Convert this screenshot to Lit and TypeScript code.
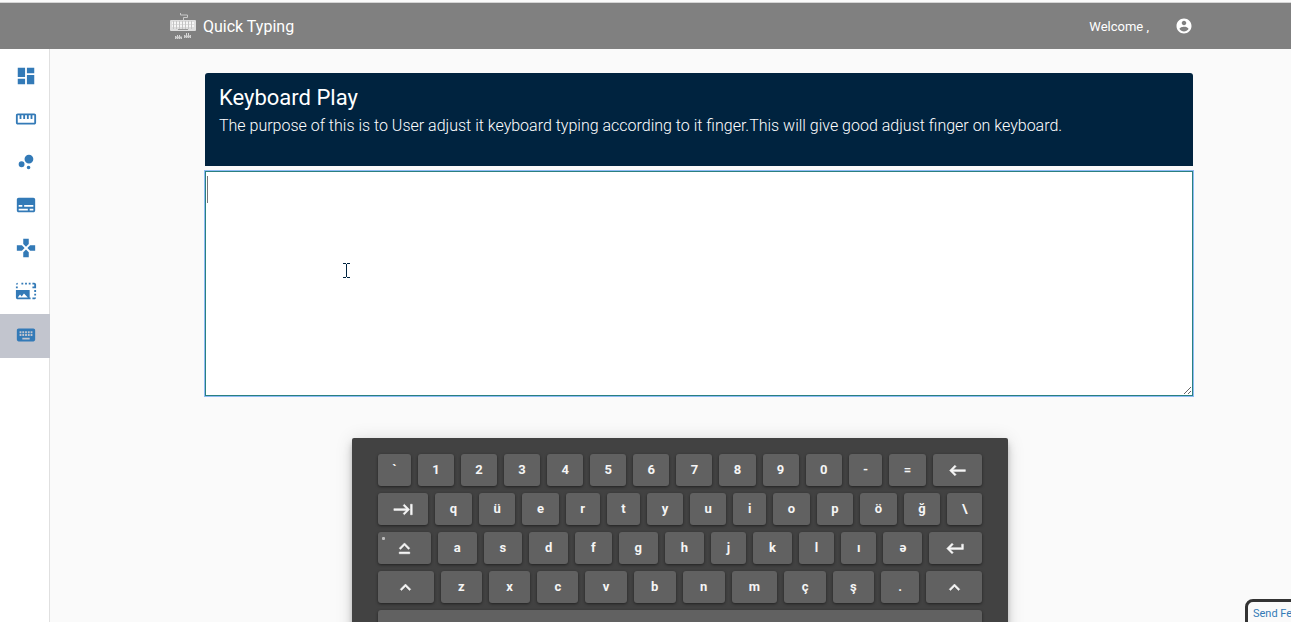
import { LitElement, html, css, svg } from "lit";
import { customElement } from "lit/decorators.js";

const nav = [
  { label: "Dashboard", d: "M3 13h8V3H3v10zm0 8h8v-6H3v6zm10 0h8V11h-8v10zm0-18v6h8V3h-8z" },
  { label: "Measure", d: "M21 6H3c-1.100 0-2 .9-2 2v8c0 1.100.9 2 2 2h18c1.100 0 2-.9 2-2V8c0-1.100-.9-2-2-2zm0 10H3V8h2v4h2V8h2v4h2V8h2v4h2V8h2v4h2V8h2v8z" },
  { label: "Bubbles", d: "M10.400 14.400a3.200 3.200 0 1 1-6.400 0a3.200 3.200 0 1 1 6.400 0zM16.800 18a2 2 0 1 1-4 0a2 2 0 1 1 4 0zM20 8.800a4.800 4.800 0 1 1-9.600 0a4.800 4.800 0 1 1 9.600 0z" },
  { label: "Subtitles", d: "M20 4H4c-1.100 0-2 .9-2 2v12c0 1.100.9 2 2 2h16c1.100 0 2-.9 2-2V6c0-1.100-.9-2-2-2zM4 12h4v2H4v-2zm10 6H4v-2h10v2zm6 0h-4v-2h4v2zm0-4H10v-2h10v2z" },
  { label: "Games", d: "M15 7.500V2H9v5.500l3 3 3-3zM7.500 9H2v6h5.500l3-3-3-3zM9 16.500V22h6v-5.500l-3-3-3 3zM16.500 9l-3 3 3 3H22V9h-5.500z" },
  { label: "Picture size", d: "M15 21h2v-2h-2v2zm4-12h2V7h-2v2zm4-4h-2v2h2V5zM15 5h2V3h-2v2zm6 8h2v-2h-2v2zm0 8c1 0 2-1 2-2h-2v2zm0-12h2V7h-2v2zm0-4h2c0-1-1-2-2-2v2zm0 12h2v-2h-2v2zM1 9h2V7H1v2zm0 4h2v-2H1v2zM11 5h2V3h-2v2zm8 0h2V3h-2v2zm0 16h2v-2h-2v2zM7 5h2V3H7v2zM1 19c0 1.100.9 2 2 2h13v-10H1v8zm2 0l2.500-3.210 1.790 2.150 2.500-3.220L14 19H3zM3 3C2 3 1 4 1 5h2V3z" },
  { label: "Keyboard", d: "M20 5H4c-1.100 0-1.990.9-1.990 2L2 17c0 1.100.9 2 2 2h16c1.100 0 2-.9 2-2V7c0-1.100-.9-2-2-2zm-9 3h2v2h-2V8zm0 3h2v2h-2v-2zM8 8h2v2H8V8zm0 3h2v2H8v-2zm-1 2H5v-2h2v2zm0-3H5V8h2v2zm9 7H8v-2h8v2zm0-4h-2v-2h2v2zm0-3h-2V8h2v2zm3 3h-2v-2h2v2zm0-3h-2V8h2v2z", active: true },
];

const glyphs: Record<string, string> = {
  Backspace: "M21 11H6.830l3.580-3.590L9 6l-6 6 6 6 1.410-1.410L6.830 13H21z",
  Tab: "M11.590 7.410L15.170 11H1v2h14.170l-3.590 3.590L13 18l6-6-6-6-1.410 1.410zM20 6v12h2V6h-2z",
  "Caps Lock": "M12 8.410L16.590 13 18 11.590l-6-6-6 6L7.410 13 12 8.410zM6 18h12v-2H6v2z",
  Enter: "M19 7v4H5.830l3.580-3.590L8 6l-6 6 6 6 1.410-1.410L5.830 13H21V7z",
  Shift: "M12 8l-6 6 1.410 1.410L12 10.830l4.590 4.580L18 14z",
};

const rows = [
  ["`", "1", "2", "3", "4", "5", "6", "7", "8", "9", "0", "-", "=", "Backspace"],
  ["Tab", "q", "ü", "e", "r", "t", "y", "u", "i", "o", "p", "ö", "ğ", "\\"],
  ["Caps Lock", "a", "s", "d", "f", "g", "h", "j", "k", "l", "ı", "ə", "Enter"],
  ["Shift", "z", "x", "c", "v", "b", "n", "m", "ç", "ş", ".", "Shift"],
  [" "],
];

@customElement("app-root")
export class AppRoot extends LitElement {
  static styles = css`
    :host {
      display: flex;
      flex-direction: column;
      position: relative;
      height: 100vh;
      overflow: hidden;
      background: #fafafa;
      font-family: Roboto, "Noto Sans", sans-serif;
    }
    * { box-sizing: border-box; }
    svg { display: block; fill: currentColor; }
    .top {
      flex: none;
      display: flex;
      align-items: center;
      height: 49px;
      padding: 2px 98px 0 169px;
      border-top: 1px solid #fafafa;
      background: linear-gradient(#fafafa 1px, #d5d5d5 1px, #d5d5d5 2px, #808080 2px);
      color: #fff;
    }
    .brand {
      display: flex;
      align-items: center;
      gap: 6px;
      color: #fff;
      font-size: 16px;
      text-decoration: none;
    }
    .welcome {
      margin-left: auto;
      font-size: 13px;
    }
    .account {
      margin-left: 26px;
      padding: 0;
      border: 0;
      background: none;
      color: #fff;
    }
    .body { flex: 1; display: flex; min-height: 0; }
    .side {
      flex: none;
      width: 50px;
      padding-top: 5px;
      border-right: 1px solid #e0e0e0;
      background: #fff;
    }
    .link {
      display: flex;
      align-items: center;
      width: 50px;
      height: 43px;
      padding-left: 15px;
      color: #337ab7;
    }
    .active { height: 44px; margin-top: 2px; padding-bottom: 2px; background: #c2c5ce; }
    .main { flex: 1; min-width: 0; padding: 24px 0 0 19px; }
    .panel { margin: 0 98px 0 136px; }
    .intro {
      height: 93px;
      padding: 11px 14px;
      border-radius: 3px 3px 0 0;
      background: #00233f;
      color: #fff;
    }
    .title { margin: 0; font-size: 22px; font-weight: 400; line-height: 28px; }
    .text { margin: 2px 0 0; font-size: 16px; font-weight: 300; line-height: 24px; }
    .editor { position: relative; margin-top: 5px; }
    .input {
      display: block;
      width: 100%;
      height: 225px;
      padding: 4px 2px;
      border: 1px solid #2a8080;
      outline: 1px solid #8fbcf5;
      background: #fff;
      font: 24px/28px Roboto, sans-serif;
      caret-color: transparent;
      resize: vertical;
    }
    .caret {
      position: absolute;
      left: 2px;
      top: 5px;
      width: 1px;
      height: 27px;
      background: #777;
    }
    .pointer { position: absolute; left: 137px; top: 91px; color: #00233f; }
    .board {
      display: flex;
      flex-direction: column;
      gap: 7px;
      width: 656px;
      margin: 42px auto 0;
      padding: 16px 26px;
      border-radius: 2px;
      background: #424242;
      box-shadow: 0 3px 5px -1px rgba(0, 0, 0, .2), 0 6px 10px rgba(0, 0, 0, .14), 0 1px 18px rgba(0, 0, 0, .12);
    }
    .row { display: flex; gap: 7px; }
    .key {
      position: relative;
      flex: 1 0 auto;
      display: flex;
      align-items: center;
      justify-content: center;
      height: 32px;
      padding: 0 12px;
      border: 0;
      border-radius: 3px;
      background: #616161;
      box-shadow: 0 1px 3px rgba(0, 0, 0, .5);
      color: #f5f5f5;
      font: 700 13px/32px Roboto, "Noto Sans", sans-serif;
    }
    .key path { stroke: currentColor; stroke-width: .6; }
    .lock::before {
      content: "";
      position: absolute;
      left: 4px;
      top: 5px;
      width: 3px;
      height: 3px;
      border-radius: 1px;
      background: #bdbdbd;
    }
    .feedback {
      position: absolute;
      right: -50px;
      bottom: -10px;
      width: 96px;
      height: 33px;
      padding: 4px 5px;
      border: 3px solid #333;
      border-radius: 8px;
      background: #fafafa;
      color: #337ab7;
      font-size: 11px;
      line-height: 16px;
      text-decoration: none;
      white-space: nowrap;
    }
  `;

  private icon(d: string, size: number) {
    return svg`<svg width=${size} height=${size} viewBox="0 0 24 24" aria-hidden="true"><path d=${d}></path></svg>`;
  }

  private key(k: string) {
    const glyph = glyphs[k];
    return html`<button type="button" class="key ${k === "Caps Lock" ? "lock" : ""}" aria-label=${k === " " ? "Space" : k}>${glyph ? this.icon(glyph, 21) : k}</button>`;
  }

  render() {
    return html`
      <header class="top">
        <a class="brand" href="#">
          <svg width="28" height="28" viewBox="0 0 28 28" aria-hidden="true">
            <path d="M11.500 1v2h7v2.500h-4v3" fill="none" stroke="#c8c8c8"></path>
            <rect x="1" y="8" width="26" height="11" rx="1" fill="#ddd"></rect>
            <path d="M3 11h22M3 14h22" stroke="#f5f5f5" stroke-width="2"></path>
            <path d="M4.500 9v8M7.500 9v8M10.500 9v8M13.500 9v8M16.500 9v8M19.500 9v8M22.500 9v8" stroke="#c4c4c4"></path>
            <path d="M9 17.500h10" stroke="#999"></path>
            <path d="M6.500 24v3M8.500 23v4M10.500 23v4M12.500 25v2M15.500 23v3M17.500 21v5M19.500 21v5M21.500 23v3" stroke="#d8d8d8"></path>
            <path d="M6 25.500h7M15 24.500h7" stroke="#ccc" stroke-width="2"></path>
          </svg>
          <span>Quick Typing</span>
        </a>
        <span class="welcome">Welcome ,</span>
        <button class="account" type="button" aria-label="Account">
          ${this.icon("M12 2C6.480 2 2 6.480 2 12s4.480 10 10 10 10-4.480 10-10S17.520 2 12 2zm0 3c1.660 0 3 1.340 3 3s-1.340 3-3 3-3-1.340-3-3 1.340-3 3-3zm0 14.200c-2.500 0-4.710-1.280-6-3.220.03-1.990 4-3.080 6-3.080 1.990 0 5.970 1.090 6 3.080-1.290 1.940-3.500 3.220-6 3.220z", 18)}
        </button>
      </header>
      <div class="body">
        <nav class="side">
          ${nav.map((n) => html`<a class="link ${n.active ? "active" : ""}" href="#" aria-label=${n.label}>${this.icon(n.d, 22)}</a>`)}
        </nav>
        <main class="main">
          <section class="panel">
            <div class="intro">
              <h1 class="title">Keyboard Play</h1>
              <p class="text">The purpose of this is to User adjust it keyboard typing according to it finger.This will give good adjust finger on keyboard.</p>
            </div>
            <div class="editor">
              <textarea class="input" aria-label="Typing area"></textarea>
              <span class="caret"></span>
              <svg class="pointer" width="9" height="17" viewBox="0 0 9 17" aria-hidden="true">
                <path d="M1 1h3v1H1zM5 1h3v1H5zM4 2h1v13H4zM1 15h3v1H1zM5 15h3v1H5z"></path>
              </svg>
            </div>
          </section>
          <div class="board" role="group" aria-label="On-screen keyboard">
            ${rows.map((r) => html`<div class="row">${r.map((k) => this.key(k))}</div>`)}
          </div>
        </main>
      </div>
      <a class="feedback" href="#">Send Feedback</a>
    `;
  }
}
